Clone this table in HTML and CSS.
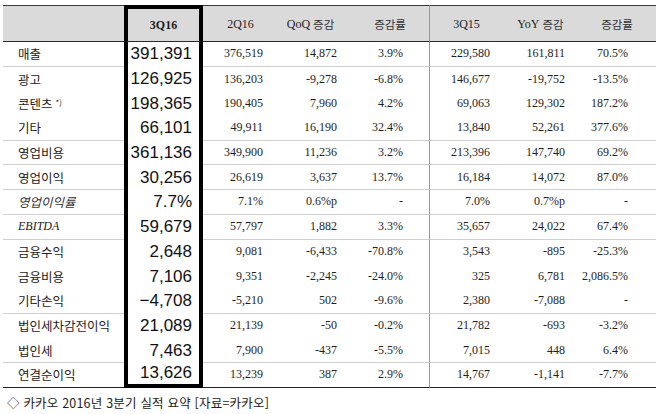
FILE: index.html
```html
<!DOCTYPE html>
<html lang="ko">
<head>
<meta charset="utf-8">
<link rel="stylesheet" href="styles.css">
</head>
<body>
<div class="sheet">
  <div class="tbl">
    <div class="row head">
      <div></div><div class="b">3Q16</div><div>2Q16</div><div>QoQ <span class="ko">증감</span></div><div class="g1"><span class="ko">증감률</span></div><div>3Q15</div><div>YoY <span class="ko">증감</span></div><div><span class="ko">증감률</span></div>
    </div>
    <div class="row line">
      <div>매출</div><div>391,391</div><div>376,519</div><div>14,872</div><div>3.9%</div><div>229,580</div><div>161,811</div><div>70.5%</div>
    </div>
    <div class="row">
      <div>광고</div><div>126,925</div><div>136,203</div><div>-9,278</div><div>-6.8%</div><div>146,677</div><div>-19,752</div><div>-13.5%</div>
    </div>
    <div class="row">
      <div>콘텐츠 <sup>*)</sup></div><div>198,365</div><div>190,405</div><div>7,960</div><div>4.2%</div><div>69,063</div><div>129,302</div><div>187.2%</div>
    </div>
    <div class="row line">
      <div>기타</div><div>66,101</div><div>49,911</div><div>16,190</div><div>32.4%</div><div>13,840</div><div>52,261</div><div>377.6%</div>
    </div>
    <div class="row line">
      <div>영업비용</div><div>361,136</div><div>349,900</div><div>11,236</div><div>3.2%</div><div>213,396</div><div>147,740</div><div>69.2%</div>
    </div>
    <div class="row line">
      <div>영업이익</div><div>30,256</div><div>26,619</div><div>3,637</div><div>13.7%</div><div>16,184</div><div>14,072</div><div>87.0%</div>
    </div>
    <div class="row line">
      <div class="it">영업이익률</div><div>7.7%</div><div>7.1%</div><div>0.6%p</div><div>-</div><div>7.0%</div><div>0.7%p</div><div>-</div>
    </div>
    <div class="row line">
      <div class="en">EBITDA</div><div>59,679</div><div>57,797</div><div>1,882</div><div>3.3%</div><div>35,657</div><div>24,022</div><div>67.4%</div>
    </div>
    <div class="row">
      <div>금융수익</div><div>2,648</div><div>9,081</div><div>-6,433</div><div>-70.8%</div><div>3,543</div><div>-895</div><div>-25.3%</div>
    </div>
    <div class="row">
      <div>금융비용</div><div>7,106</div><div>9,351</div><div>-2,245</div><div>-24.0%</div><div>325</div><div>6,781</div><div>2,086.5%</div>
    </div>
    <div class="row line">
      <div>기타손익</div><div>−4,708</div><div>-5,210</div><div>502</div><div>-9.6%</div><div>2,380</div><div>-7,088</div><div>-</div>
    </div>
    <div class="row">
      <div>법인세차감전이익</div><div>21,089</div><div>21,139</div><div>-50</div><div>-0.2%</div><div>21,782</div><div>-693</div><div>-3.2%</div>
    </div>
    <div class="row line">
      <div>법인세</div><div>7,463</div><div>7,900</div><div>-437</div><div>-5.5%</div><div>7,015</div><div>448</div><div>6.4%</div>
    </div>
    <div class="row last">
      <div>연결순이익</div><div>13,626</div><div>13,239</div><div>387</div><div>2.9%</div><div>14,767</div><div>-1,141</div><div>-7.7%</div>
    </div>
  </div>
  <p class="caption">◇ 카카오 2016년 3분기 실적 요약 [자료=카카오]</p>
</div>
</body>
</html>
```

FILE: styles.css
```css
html, body {
  margin: 0;
  padding: 0;
  background: #fff;
}

.sheet {
  padding: 5px 0 0 3px;
}

.tbl {
  display: grid;
  grid-template-columns: 121px 79px 75px 65px 86px 74px 75px 78px;
  grid-template-rows: 37px;
  grid-auto-rows: 24.7px;
  width: 653px;
}

.row {
  display: contents;
}

.row > div {
  box-sizing: border-box;
  display: flex;
  align-items: center;
  justify-content: flex-end;
  font-family: "Liberation Serif", "Noto Sans CJK KR", serif;
  font-size: 12px;
  color: #1e1e1e;
  white-space: nowrap;
}

/* label column */
.row > div:nth-child(1) {
  justify-content: flex-start;
  padding-left: 15px;
  font-family: "Noto Sans CJK KR", sans-serif;
  font-size: 12.5px;
  letter-spacing: 0;
  color: #222;
}

.row > div:nth-child(1) sup {
  font-size: 8px;
  margin-left: 3px;
  position: relative;
  top: -1px;
}

.row > div.it {
  font-style: italic;
  color: #333;
}

.row > div.en {
  font-family: "Liberation Serif", serif;
  font-size: 12px;
  font-style: italic;
}

/* highlighted 3Q16 column */
.row > div:nth-child(2) {
  border-left: 4px solid #000;
  border-right: 4px solid #000;
  padding-right: 7px;
  font-family: "Liberation Sans", Arial, sans-serif;
  font-size: 17px;
  color: #111;
}

.row > div:nth-child(3) { padding-right: 15px; }
.row > div:nth-child(4) { padding-right: 6px; }
.row > div:nth-child(5) { padding-right: 26px; }
.row > div:nth-child(6) { padding-right: 13px; border-left: 1px solid #9a9a9a; }
.row > div:nth-child(7) { padding-right: 13px; }
.row > div:nth-child(8) { padding-right: 28px; }

/* header */
.head > div {
  background: #dadada;
  border-top: 1px solid #3a3a3a;
  border-bottom: 1px solid #2a2a2a;
}

.head > div:nth-child(n) {
  justify-content: center;
  padding-right: 0;
  padding-top: 1px;
}

.head > div:nth-child(2) {
  border-top: 4px solid #000;
  font-family: "Liberation Serif", serif;
  font-size: 12px;
  font-weight: bold;
  color: #1e1e1e;
}

.head > div.g1 {
  padding-left: 8px;
}

.ko {
  font-family: "Noto Sans CJK KR", sans-serif;
  font-size: 11.5px;
  margin-left: 3px;
  color: #333;
}

.head > div.g1 .ko,
.head > div:nth-child(8) .ko {
  margin-left: 0;
}

/* separators */
.line > div {
  border-bottom: 1px solid #cfcfcf;
}

.line > div:nth-child(2) {
  border-bottom: 0;
}

.last > div {
  border-bottom: 1px solid #222;
}

.last > div:nth-child(2) {
  border-bottom: 4px solid #000;
}

.caption {
  margin: 8px 0 0 0;
  padding-left: 4px;
  font-family: "Noto Sans CJK KR", sans-serif;
  font-size: 12.5px;
  line-height: 14px;
  letter-spacing: 0.2px;
  color: #222;
}
```
